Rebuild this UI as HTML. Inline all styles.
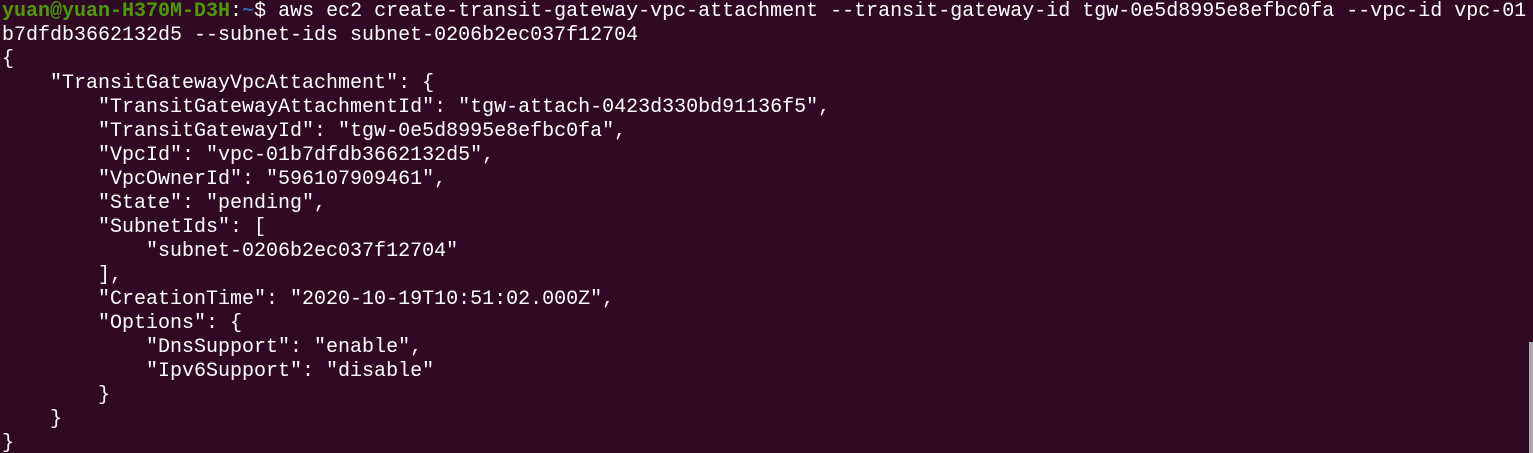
<!DOCTYPE html>
<html><head><meta charset="utf-8"><style>
html,body{margin:0;padding:0;background:#300a24;width:1533px;height:453px;overflow:hidden}
pre{margin:0;padding:0 0 0 2px;font-family:"Liberation Mono","DejaVu Sans Mono",monospace;font-size:20px;line-height:24px;color:#ffffff;white-space:pre;position:relative;top:0px}
.g{color:#4e9a06;font-weight:bold}.b{color:#3465a4;font-weight:bold}
.sb{position:absolute;left:1529px;top:342px;width:4px;height:111px;background:#ababab}
</style></head><body>
<pre><span class="g">yuan@yuan-H370M-D3H</span>:<span class="b">~</span>$ aws ec2 create-transit-gateway-vpc-attachment --transit-gateway-id tgw-0e5d8995e8efbc0fa --vpc-id vpc-01
b7dfdb3662132d5 --subnet-ids subnet-0206b2ec037f12704
{
    "TransitGatewayVpcAttachment": {
        "TransitGatewayAttachmentId": "tgw-attach-0423d330bd91136f5",
        "TransitGatewayId": "tgw-0e5d8995e8efbc0fa",
        "VpcId": "vpc-01b7dfdb3662132d5",
        "VpcOwnerId": "596107909461",
        "State": "pending",
        "SubnetIds": [
            "subnet-0206b2ec037f12704"
        ],
        "CreationTime": "2020-10-19T10:51:02.000Z",
        "Options": {
            "DnsSupport": "enable",
            "Ipv6Support": "disable"
        }
    }
}</pre>
<div class="sb"></div>
</body></html>
